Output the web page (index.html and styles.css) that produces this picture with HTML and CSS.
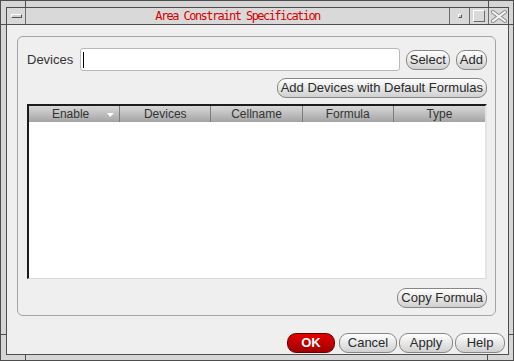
FILE: index.html
```html
<!DOCTYPE html>
<html lang="en">
<head>
  <meta charset="UTF-8" />
  <title>Area Constraint Specification</title>
  <link rel="stylesheet" href="styles.css">
</head>
<body>
  <div class="window">
    <div class="frame-inner">
      <div class="titlebar">
        <div class="tb-btn tb-menu"><span class="menu-bar"></span></div>
        <div class="tb-title">Area Constraint Specification</div>
        <div class="tb-btn tb-min"><span class="min-box"></span></div>
        <div class="tb-btn tb-max"><span class="max-box"></span></div>
        <div class="tb-btn tb-close">
          <svg width="16" height="13" viewBox="0 0 16 13">
            <path d="M2 2 L14 11 M14 2 L2 11" stroke="#8c8c8c" stroke-width="4" stroke-linecap="square" fill="none"/>
            <path d="M2 2 L14 11 M14 2 L2 11" stroke="#f4f4f4" stroke-width="2" stroke-linecap="square" fill="none"/>
          </svg>
        </div>
      </div>

      <div class="client">
        <div class="group">
          <div class="devices-row">
            <span class="label">Devices</span>
            <div class="text-field"><span class="caret"></span></div>
            <button class="btn btn-select">Select</button>
            <button class="btn btn-add">Add</button>
          </div>

          <div class="right-row add-row">
            <button class="btn">Add Devices with Default Formulas</button>
          </div>

          <div class="table">
            <div class="table-head">
              <div class="th th-sort">Enable<span class="sort-arrow"></span></div>
              <div class="th">Devices</div>
              <div class="th">Cellname</div>
              <div class="th">Formula</div>
              <div class="th">Type</div>
            </div>
            <div class="table-body"></div>
          </div>

          <div class="right-row copy-row">
            <button class="btn">Copy Formula</button>
          </div>
        </div>

        <div class="dialog-buttons">
          <button class="btn btn-ok">OK</button>
          <button class="btn btn-cancel">Cancel</button>
          <button class="btn btn-apply">Apply</button>
          <button class="btn btn-help">Help</button>
        </div>
      </div>
    </div>

    <!-- resize corner marks on the frame -->
    <span class="handle h-top-left"></span>
    <span class="handle h-top-right"></span>
    <span class="handle h-left-top"></span>
    <span class="handle h-right-top"></span>
    <span class="handle h-bottom-left"></span>
    <span class="handle h-bottom-right"></span>
    <span class="handle h-left-bottom"></span>
    <span class="handle h-right-bottom"></span>
  </div>
</body>
</html>
```

FILE: styles.css
```css
body {
  margin: 0;
  font-family: 'Liberation Sans', Arial, sans-serif;
  font-size: 13px;
}

.window {
  position: relative;
  width: 514px;
  height: 361px;
  box-sizing: border-box;
  border: 1px solid #4d4d4d;
  padding: 6px 4px 5px 5px;
  background: #d6d6d6;
}

.frame-inner {
  height: 100%;
  box-sizing: border-box;
  border: 1px solid #4d4d4d;
  display: flex;
  flex-direction: column;
}

/* title bar */
.titlebar {
  display: flex;
  height: 17px;
  box-sizing: border-box;
  border-bottom: 1px solid #4d4d4d;
  background: #d9d9d9;
}

.tb-btn {
  height: 16px;
  display: flex;
  align-items: center;
  justify-content: center;
}

.tb-menu {
  width: 18px;
  border-right: 1px solid #6e6e6e;
}

.tb-min, .tb-close {
  width: 19px;
  border-left: 1px solid #6e6e6e;
}

.tb-max {
  width: 18px;
  border-left: 1px solid #6e6e6e;
}

.tb-title {
  flex: 1;
  text-align: center;
  line-height: 16px;
  color: #d80000;
  font-family: 'DejaVu Sans Mono', 'Liberation Mono', monospace;
  font-size: 12px;
  letter-spacing: -1.55px;
}

.menu-bar {
  width: 9px;
  height: 2px;
  border: 1px solid;
  border-color: #ffffff #555555 #555555 #ffffff;
  background: #d0d0d0;
}

.min-box {
  width: 2px;
  height: 2px;
  border: 1px solid;
  border-color: #ffffff #555555 #555555 #ffffff;
  background: #c8c8c8;
}

.max-box {
  width: 10px;
  height: 10px;
  border: 1px solid;
  border-color: #ffffff #6a6a6a #6a6a6a #ffffff;
}

.handle {
  position: absolute;
  background: #4d4d4d;
}

.h-top-left { left: 24px; top: 0; width: 1px; height: 6px; }
.h-top-right { left: 487px; top: 0; width: 1px; height: 6px; }
.h-left-top { left: 0; top: 23px; width: 5px; height: 1px; }
.h-right-top { right: 0; top: 23px; width: 4px; height: 1px; }
.h-bottom-left { left: 24px; bottom: 0; width: 1px; height: 5px; }
.h-bottom-right { left: 486px; bottom: 0; width: 1px; height: 5px; }
.h-left-bottom { left: 0; top: 333px; width: 5px; height: 1px; }
.h-right-bottom { right: 0; top: 333px; width: 4px; height: 1px; }

/* dialog body */
.client {
  flex: 1;
  background: #efefef;
  padding: 11px 3px 0 10px;
  display: flex;
  flex-direction: column;
}

.group {
  width: 479px;
  height: 280px;
  box-sizing: border-box;
  border: 1px solid #a4a4a4;
  border-radius: 6px;
  padding: 11px 8px 7px 9px;
  display: flex;
  flex-direction: column;
}

.devices-row {
  display: flex;
  align-items: center;
  height: 23px;
}

.label {
  color: #333333;
  margin-right: 7px;
}

.text-field {
  flex: 1;
  height: 23px;
  box-sizing: border-box;
  border: 1px solid #b8b8b8;
  border-radius: 3px;
  background: #ffffff;
  display: flex;
  align-items: center;
  padding-left: 2px;
}

.caret {
  width: 1px;
  height: 16px;
  background: #000000;
}

.btn {
  height: 20px;
  box-sizing: border-box;
  padding: 0 3px;
  font-family: 'Liberation Sans', Arial, sans-serif;
  font-size: 13px;
  line-height: 18px;
  color: #2a2a2a;
  border: 1px solid #878787;
  border-radius: 9px;
  background: linear-gradient(#ffffff, #d0d0d0);
  white-space: nowrap;
}

.btn-select, .btn-add {
  margin-left: 6px;
}

.right-row {
  display: flex;
  justify-content: flex-end;
}

.add-row {
  margin-top: 7px;
}

.copy-row {
  margin-top: 9px;
}

/* device table */
.table {
  margin-top: 6px;
  height: 175px;
  box-sizing: border-box;
  border-style: solid;
  border-width: 2px 2px 1px 2px;
  border-color: #1c1c1c #e4e4e4 #d8d8d8 #1c1c1c;
  background: #ffffff;
  display: flex;
  flex-direction: column;
}

.table-head {
  display: grid;
  grid-template-columns: repeat(5, 1fr);
  height: 16px;
  background: linear-gradient(#d8d8d8, #a4a4a4);
}

.th {
  position: relative;
  font-size: 12px;
  line-height: 16px;
  text-align: center;
  color: #333333;
  border-right: 1px solid #7c7c7c;
}

.th:last-child {
  border-right: none;
}

.th-sort {
  padding-right: 7px;
}

.sort-arrow {
  position: absolute;
  right: 5px;
  top: 7px;
  width: 0;
  height: 0;
  border-left: 3px solid transparent;
  border-right: 4px solid transparent;
  border-top: 4px solid #ffffff;
}

.table-body {
  flex: 1;
}

/* OK / Cancel / Apply / Help */
.dialog-buttons {
  margin-top: 17px;
  display: flex;
  justify-content: flex-end;
  gap: 2px;
}

.btn-ok {
  width: 48px;
  margin-right: 2px;
  color: #ffffff;
  font-weight: bold;
  border-color: #6e0000;
  background: linear-gradient(#e20000, #a00000);
}

.btn-cancel { width: 58px; }
.btn-apply { width: 54px; }
.btn-help { width: 50px; }
```
